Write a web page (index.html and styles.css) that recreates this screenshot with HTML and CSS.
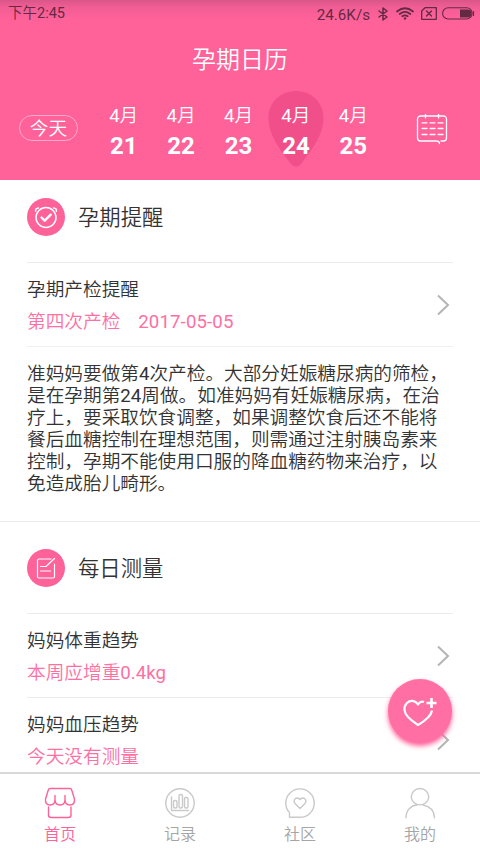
FILE: index.html
```html
<!DOCTYPE html>
<html lang="zh-CN">
<head>
<meta charset="utf-8">
<meta name="viewport" content="width=device-width, initial-scale=1">
<title>孕期日历</title>
<link rel="stylesheet" href="styles.css">
</head>
<body>
<div class="app">
  <header class="header">
    <div class="status">
      <span class="clock">下午2:45</span>
      <div class="status-right">
        <span class="speed">24.6K/s</span>
        <svg class="bluetooth" width="10" height="14" viewBox="0 0 10 14"><path d="M1 4l8 6-4 3V1l4 3-8 6"/></svg>
        <svg class="wifi" width="18" height="13" viewBox="0 0 18 13"><path d="M1 4.500Q9-2 17 4.500M3.700 7Q9 2.700 14.300 7M6.300 9.300Q9 7.300 11.700 9.300"/><circle cx="9" cy="11.500" r="1.200"/></svg>
        <svg class="sim" width="16" height="13" viewBox="0 0 16 13"><path d="M4 .7h11.300v11.600H.7V4zM5.500 4l5 5m0-5l-5 5"/></svg>
        <svg class="battery" width="33" height="13" viewBox="0 0 33 13"><rect x=".6" y=".8" width="29.500" height="11.200" rx="5.600"/><path class="solid" d="M18 2.500h7.500a4 4 0 0 1 0 8H18z"/><path d="M31.500 4.500v4"/></svg>
      </div>
    </div>
    <h1 class="title">孕期日历</h1>
    <div class="dates">
      <button class="today">今天</button>
      <div class="days">
        <div class="day"><span>4月</span><b>21</b></div>
        <div class="day"><span>4月</span><b>22</b></div>
        <div class="day"><span>4月</span><b>23</b></div>
        <div class="day"><svg class="pin" width="56" height="77" viewBox="0 0 56 77"><path d="M28 0C43.500 0 55.500 11.500 55.500 27C55.500 45 42 61 33 73Q28 78.500 23 73C14 61 .5 45 .5 27C.5 11.500 12.500 0 28 0z"/></svg><span>4月</span><b>24</b></div>
        <div class="day"><span>4月</span><b>25</b></div>
      </div>
      <svg class="calendar" width="32" height="31" viewBox="0 0 32 31"><path d="M25 27h2.500a3 3 0 0 0 3-3V5a3 3 0 0 0-3-3h-23a3 3 0 0 0-3 3v19a3 3 0 0 0 3 3H20q3.500 0 3.500 2.500M9.500 0v4M22.500 0v4M6 8.800h5m3 0h5m3 0h5M6 14.500h5m3 0h5m3 0h5M6 20.500h5m3 0h5m3 0h5"/></svg>
    </div>
  </header>

  <main class="content">
    <section class="section">
      <div class="section-head">
        <svg class="badge" width="38" height="38" viewBox="0 0 38 38"><circle class="disc" cx="19" cy="19" r="19"/><circle cx="19" cy="19.500" r="10"/><path d="M8.700 13.200q-.8-2.800 2.800-3.200M29.300 13.200q.8-2.800-2.800-3.200"/><path class="tick" d="M14.500 19.500l3.200 3.200 6-6"/></svg>
        <h2>孕期提醒</h2>
      </div>
      <div class="row">
        <div class="row-text"><div class="row-title">孕期产检提醒</div><div class="row-sub"><span>第四次产检</span><span class="date">2017-05-05</span></div></div>
        <svg class="chevron" width="14" height="22" viewBox="0 0 14 22"><path d="M2 1.500L12 11 2 20.500"/></svg>
      </div>
      <p class="note">准妈妈要做第4次产检。大部分妊娠糖尿病的筛检，<br>是在孕期第24周做。如准妈妈有妊娠糖尿病，在治<br>疗上，要采取饮食调整，如果调整饮食后还不能将<br>餐后血糖控制在理想范围，则需通过注射胰岛素来<br>控制，孕期不能使用口服的降血糖药物来治疗，以<br>免造成胎儿畸形。</p>
    </section>
    <section class="section measure">
      <div class="section-head">
        <svg class="badge thin" width="38" height="38" viewBox="0 0 38 38"><circle class="disc" cx="19" cy="19" r="19"/><path d="M24 10H12a1.500 1.500 0 0 0-1.500 1.500v16A1.500 1.500 0 0 0 12 29h14a1.500 1.500 0 0 0 1.500-1.500V15M13.500 17.500H19l8.500-8M13.500 22h10"/></svg>
        <h2>每日测量</h2>
      </div>
      <div class="row">
        <div class="row-text"><div class="row-title">妈妈体重趋势</div><div class="row-sub">本周应增重0.4kg</div></div>
        <svg class="chevron" width="14" height="22" viewBox="0 0 14 22"><path d="M2 1.500L12 11 2 20.500"/></svg>
      </div>
      <div class="row">
        <div class="row-text"><div class="row-title">妈妈血压趋势</div><div class="row-sub">今天没有测量</div></div>
        <svg class="chevron" width="14" height="22" viewBox="0 0 14 22"><path d="M2 1.500L12 11 2 20.500"/></svg>
      </div>
    </section>
  </main>

  <button class="fab" aria-label="添加">
    <svg width="36" height="30" viewBox="0 0 36 30"><path d="M22 5C19 4 17 6 16 7.500C13 3 8 3 5 6C1 10 2 16 6 20Q10 24 16 28Q22 24.500 26 20.500Q29.500 17 30 13.500"/><path class="plus" d="M29.500 1v10M24.500 6h10"/></svg>
  </button>

  <nav class="tabs">
    <a class="tab active"><svg width="32" height="32" viewBox="0 0 32 32"><path d="M6 1.500h20q1.200 0 1.700 1.500L30.500 12q.5 6-4.500 6-5 0-5-5.500V8.500v4q0 5.500-5 5.500t-5-5.500V8.500v4Q11 18 6 18 1 18 1.500 12L4.300 3Q4.800 1.500 6 1.500zM4.500 20v8q0 2.500 2.500 2.500h17.500q2.500 0 2.500-2.500v-8"/></svg><span>首页</span></a>
    <a class="tab"><svg width="32" height="32" viewBox="0 0 32 32"><circle cx="16" cy="16" r="14.200"/><path d="M7.500 10v13.500h17"/><rect x="9.500" y="13.500" width="3.500" height="7.500" rx="1.500"/><rect x="15" y="7.500" width="3.500" height="13.500" rx="1.500"/><rect x="20.500" y="10.500" width="3.500" height="10.500" rx="1.500"/></svg><span>记录</span></a>
    <a class="tab"><svg width="32" height="32" viewBox="0 0 32 32"><path d="M5.500 25.500Q1.800 22 1.800 16A14.200 14.200 0 1 1 16 30.300H5.500zM16 21.500l-5-5C8 13 13 8.500 16 12.500 19 8.500 24 13 21 16.500z"/></svg><span>社区</span></a>
    <a class="tab"><svg width="32" height="32" viewBox="0 0 32 32"><ellipse cx="16" cy="9.700" rx="8.700" ry="8.200"/><path d="M2 30.800C2 23 7.500 18.200 13 18M19 18q11 2 11.500 12.800"/></svg><span>我的</span></a>
  </nav>
</div>
</body>
</html>
```
FILE: styles.css
```css
* { box-sizing: border-box; }
body {
  margin: 0;
  font-family: Roboto, "Noto Sans CJK SC DemiLight", "Noto Sans CJK SC", sans-serif;
  font-weight: 400;
  color: #333;
  background: #fff;
}
h1, h2, p { margin: 0; font-weight: inherit; }
button { padding: 0; font: inherit; color: #fff; }
svg {
  display: block;
  flex: none;
  fill: none;
  stroke: currentColor;
  stroke-linecap: round;
  stroke-linejoin: round;
}
.app { position: relative; display: flex; flex-direction: column; height: 853px; overflow: hidden; }

.header {
  flex: none;
  height: 180px;
  color: #fff;
  background: linear-gradient(#d9568a 0, #f05d94 7px, #ff6199 18px);
}
.status {
  display: flex;
  justify-content: space-between;
  height: 28px;
  padding: 0 6px 0 8px;
  align-items: center;
  color: #632a44;
  font-size: 14.500px;
  line-height: 28px;
}
.status-right { display: flex; align-items: center; height: 27px; }
.speed { margin-right: 8px; padding-top: 1px; font-size: 15.200px; }
.bluetooth { stroke-width: 1.500; margin-right: 8px; }
.wifi { stroke-width: 1.700; margin-right: 7px; }
.wifi circle, .solid { fill: currentColor; stroke: none; }
.sim { stroke-width: 1.300; margin-right: 5px; }
.battery { margin-right: -1px; stroke-width: 1.100; }
.bluetooth, .wifi, .sim, .battery { margin-top: -1px; }
.title { height: 62px; padding-top: 1px; font-size: 24px; line-height: 62px; text-align: center; }
.dates { display: flex; height: 90px; padding-left: 19px; }
.today {
  width: 59px;
  height: 26px;
  margin-top: 25px;
  border: 1px solid #ffabc9;
  border-radius: 13px;
  background: none;
  font-size: 18.660px;
  line-height: 26px;
}
.days { display: flex; width: 287px; margin-left: 17px; }
.day {
  position: relative;
  display: flex;
  flex: 1;
  flex-direction: column;
  align-items: center;
  padding-top: 13px;
  font-size: 18.660px;
  line-height: 27px;
}
.day b { position: relative; font-size: 24px; font-weight: 700; line-height: 32px; }
.day span { position: relative; }
.pin { position: absolute; top: 1px; left: 1px; fill: #f14f8a; stroke: none; }
.calendar { margin: 24px 0 0 34px; stroke-width: 1.300; }

.content { flex: 1; min-height: 0; overflow: hidden; }
.section { padding: 0 27px; }
.section-head { display: flex; align-items: center; height: 82px; padding-bottom: 9px; }
.section-head h2 { margin-left: 13px; padding-top: 2px; font-size: 21.330px; line-height: 32px; }
.badge { color: #fff; stroke-width: 1.500; }
.thin { stroke-width: 1.200; }
.disc { fill: #ff6199; stroke: none; }
.tick { stroke-width: 2.400; }
.row {
  display: flex;
  justify-content: space-between;
  align-items: center;
  height: 84px;
  padding-right: 3px;
  border-top: 1px solid #ececec;
  font-size: 18.660px;
}
.row-text { padding-top: 3px; }
.row-title { line-height: 32px; }
.row-sub { color: #ff6fa2; line-height: 32px; }
.date { margin-left: 18px; letter-spacing: .1px; }
.chevron { color: #b4b4b4; stroke-width: 2; stroke-linecap: butt; stroke-linejoin: miter; }
.note {
  height: 175px;
  padding-top: 17px;
  border-top: 1px solid #f0f0f0;
  font-size: 18.660px;
  line-height: 21.900px;
  white-space: nowrap;
}
.measure { border-top: 1px solid #ececec; }
.measure .section-head { height: 91px; padding-bottom: 0; }

.fab {
  position: absolute;
  left: 388px;
  top: 679px;
  width: 64px;
  height: 64px;
  display: grid;
  place-items: center;
  border: 0;
  border-radius: 50%;
  background: #ff6fa3;
  box-shadow: 0 3px 5px #ff6199;
}
.fab svg { margin-top: 2px; stroke-width: 2.200; stroke-linecap: butt; }
.fab .plus { stroke-width: 2.600; }
.tabs {
  display: flex;
  flex: none;
  height: 81px;
  border-top: 2px solid #d9d9d9;
  background: #fff;
}
.tab {
  display: flex;
  flex: 1;
  flex-direction: column;
  align-items: center;
  padding-top: 13px;
  color: #a5a5a5;
  font-size: 16px;
  line-height: 24px;
}
.tab svg { color: #c9c9c9; stroke-width: 1.400; }
.tab span { margin-top: 4px; }
.tab.active, .tab.active svg { color: #ff6199; }
```
